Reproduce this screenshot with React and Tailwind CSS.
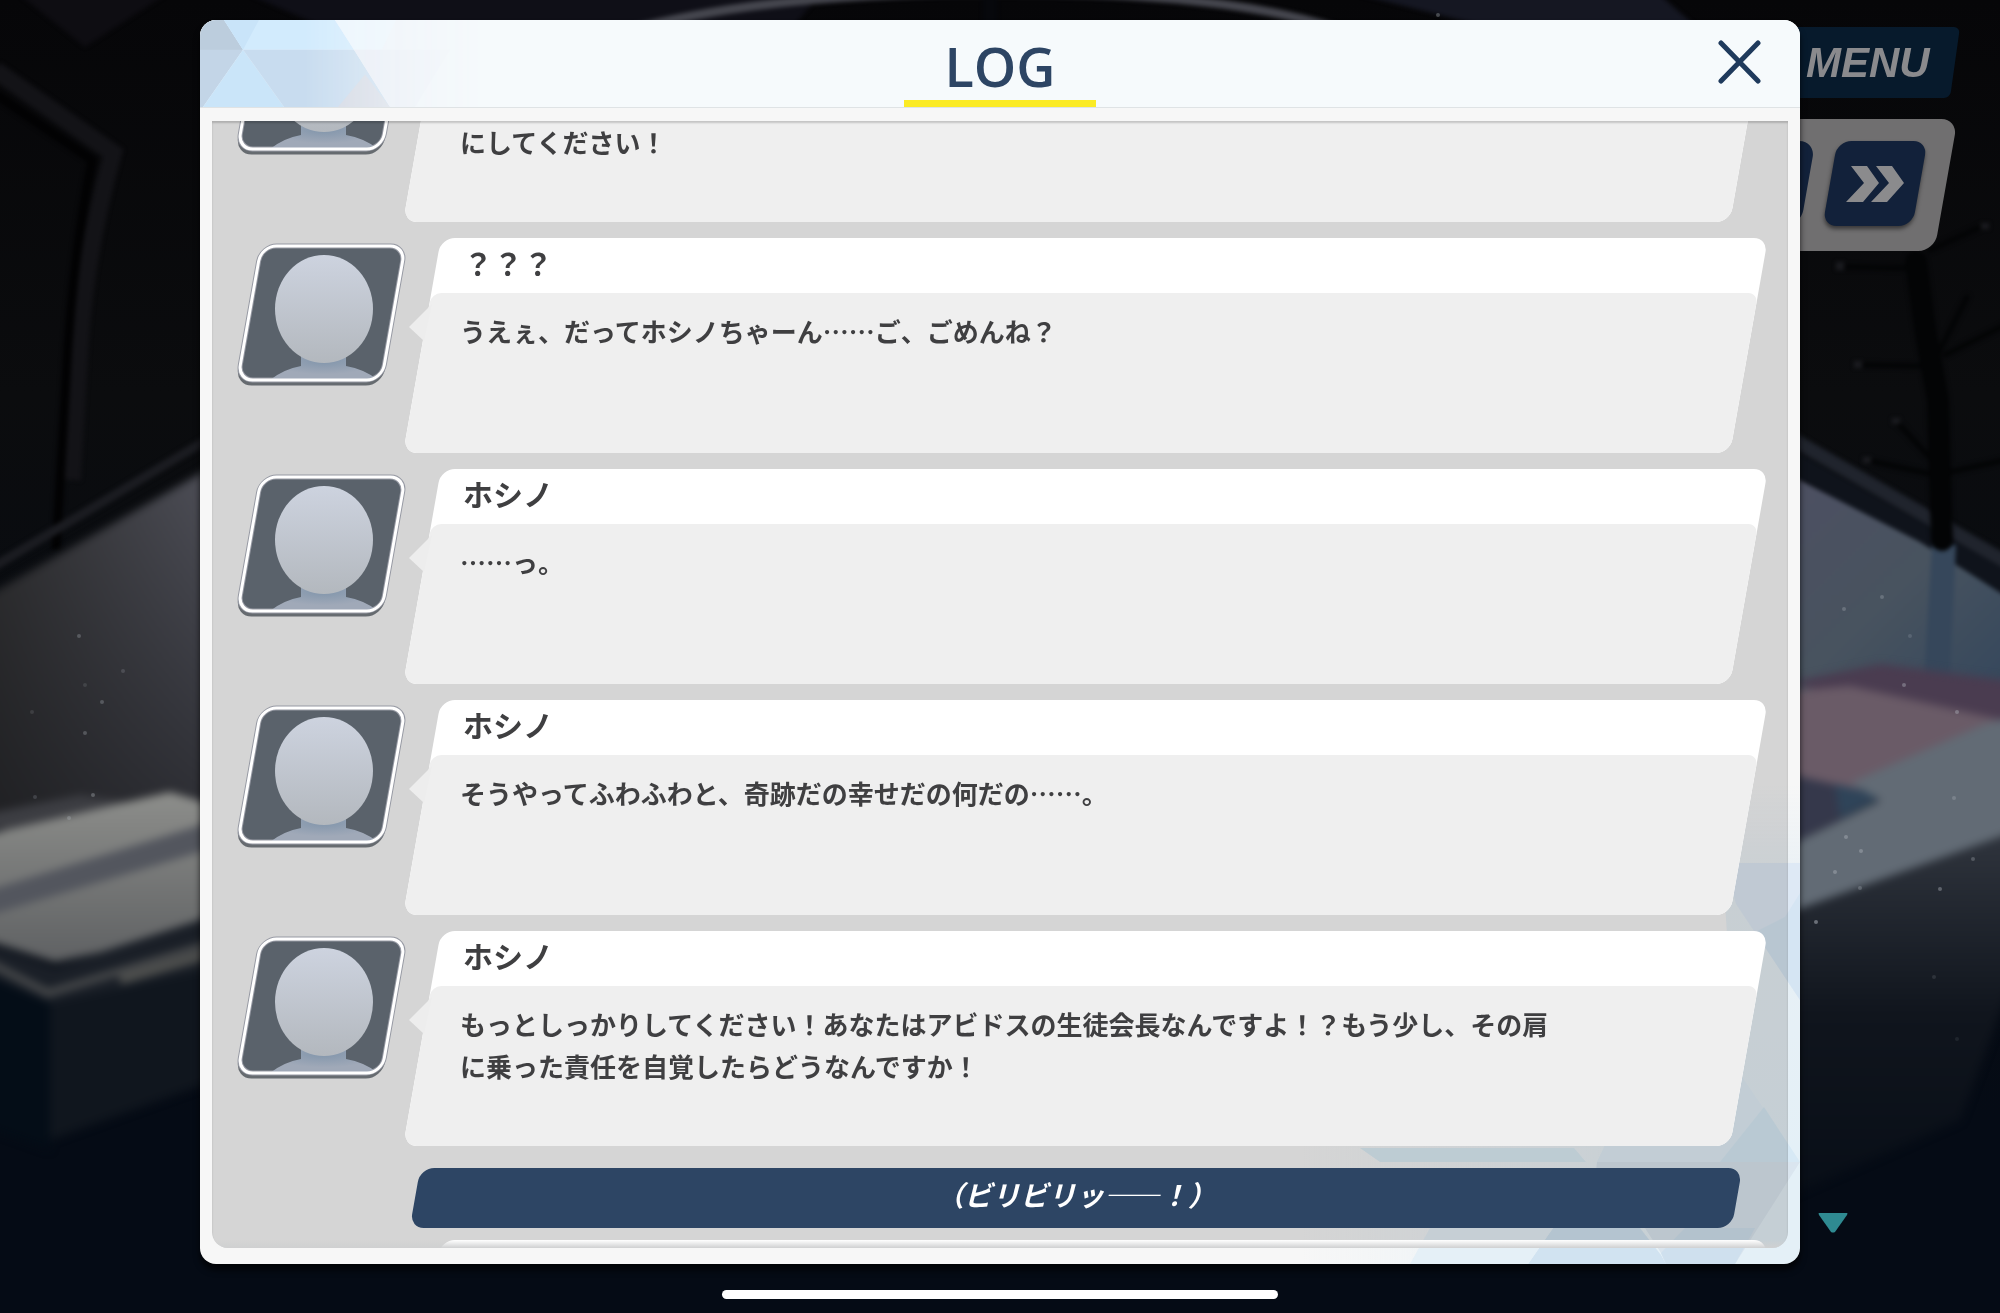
import React from 'react';

const LOG = [
  { type: 'talk', avatar: true, name: '', lines: ['', 'にしてください！'] },
  { type: 'talk', avatar: true, name: '？？？', lines: ['うえぇ、だってホシノちゃーん……ご、ごめんね？'] },
  { type: 'talk', avatar: true, name: 'ホシノ', lines: ['……っ。'] },
  { type: 'talk', avatar: true, name: 'ホシノ', lines: ['そうやってふわふわと、奇跡だの幸せだの何だの……。'] },
  {
    type: 'talk',
    avatar: true,
    name: 'ホシノ',
    lines: [
      'もっとしっかりしてください！あなたはアビドスの生徒会長なんですよ！？もう少し、その肩',
      'に乗った責任を自覚したらどうなんですか！',
    ],
  },
  { type: 'narration', text: '（ビリビリッ――！）' },
  { type: 'talk', avatar: false, name: '', lines: [] },
];

// x, y, radius, opacity
const DUST = [
  [79, 636, 2, 0.3], [102, 702, 2, 0.3], [123, 671, 2, 0.2], [85, 685, 2, 0.15], [85, 733, 2, 0.3],
  [93, 795, 2, 0.35], [32, 712, 2, 0.15], [35, 797, 2, 0.2], [69, 818, 2, 0.3], [1844, 609, 2, 0.3],
  [1882, 597, 2, 0.3], [1910, 636, 2, 0.2], [1904, 685, 2, 0.4], [1957, 712, 2, 0.4], [1954, 798, 2, 0.3],
  [1846, 837, 2, 0.4], [1861, 851, 2, 0.4], [1835, 872, 2, 0.4], [1860, 888, 2, 0.3], [1940, 889, 2, 0.4],
  [1816, 922, 2, 0.5], [1973, 859, 2, 0.3], [1934, 977, 2, 0.15], [1957, 1039, 2, 0.1], [1438, 15, 2, 0.35],
];

function Scene() {
  return (
    <svg className="absolute inset-0 w-full h-full" viewBox="0 0 2000 1313" preserveAspectRatio="xMidYMid slice" aria-hidden="true">
      <defs>
        <linearGradient id="floor" x1="0" y1="0" x2="0" y2="1">
          <stop offset="0" stopColor="#060608" />
          <stop offset="0.3" stopColor="#0b0c0e" />
          <stop offset="0.85" stopColor="#050b15" />
          <stop offset="1" stopColor="#050b15" />
        </linearGradient>
        <linearGradient id="wallL" x1="0" y1="0" x2="1" y2="0">
          <stop offset="0" stopColor="#2d2d2e" />
          <stop offset="1" stopColor="#50515a" />
        </linearGradient>
        <linearGradient id="shadeL" x1="0" y1="0" x2="0" y2="1">
          <stop offset="0" stopColor="#15161a" stopOpacity="0" />
          <stop offset="1" stopColor="#15161a" stopOpacity="0.6" />
        </linearGradient>
        <linearGradient id="wallR" x1="0" y1="0" x2="1" y2="1">
          <stop offset="0" stopColor="#4d4f62" />
          <stop offset="0.5" stopColor="#48535f" />
          <stop offset="1" stopColor="#33465c" />
        </linearGradient>
        <linearGradient id="benchL" x1="0" y1="0" x2="0" y2="1">
          <stop offset="0" stopColor="#8d8e8b" />
          <stop offset="1" stopColor="#5f6163" />
        </linearGradient>
        <linearGradient id="fadeR" x1="0" y1="0" x2="0" y2="1">
          <stop offset="0" stopColor="#30353e" />
          <stop offset="0.5" stopColor="#10151d" />
          <stop offset="1" stopColor="#080e17" />
        </linearGradient>
        <filter id="soft" x="-10%" y="-10%" width="120%" height="120%" colorInterpolationFilters="sRGB"><feGaussianBlur stdDeviation="4" /></filter>
        <filter id="thin" x="-20%" y="-20%" width="140%" height="140%" colorInterpolationFilters="sRGB"><feGaussianBlur stdDeviation="2" /></filter>
      </defs>
      <rect width="2000" height="1313" fill="url(#floor)" />

      <g filter="url(#thin)">
        <path d="M20 -5L85 47L165 -5Z" fill="#0e0d12" />
        <path d="M250 -5H820L790 30H330Z" fill="#0f0f17" />
        <path d="M630 30Q770 -8 1000 -8T1340 30" stroke="#45464e" strokeWidth="9" fill="none" />
        <path d="M1360 -5H1660L1700 30H1500Z" fill="#151722" />
        <path d="M990 -5V30" stroke="#07080c" strokeWidth="14" />
        <path d="M-5 70L113 153Q86 250 80 340L72 480" stroke="#131317" strokeWidth="18" fill="none" />
        <path d="M-5 94L92 160Q72 260 66 380L56 550" stroke="#020203" strokeWidth="9" fill="none" />
        <path d="M-5 566L220 432" stroke="#1b1c21" strokeWidth="9" />
      </g>

      <g filter="url(#soft)">
        <path d="M-20 600L220 462V830H-20Z" fill="url(#wallL)" />
        <path d="M-20 600L220 462V830H-20Z" fill="url(#shadeL)" />
        <path d="M-20 815L80 795L200 812V830H-20Z" fill="#3c3d42" />
        <path d="M-20 836L170 792L230 810V925L55 962L-20 938Z" fill="url(#benchL)" />
        <path d="M-20 893L230 816V843L-20 918Z" fill="#53565e" />
        <path d="M-20 940L55 967L230 910V1080H-20Z" fill="#1a1f27" />
        <path d="M-20 958L48 993L230 938" stroke="#46484a" strokeWidth="8" fill="none" />
        <path d="M120 980L230 948" stroke="#50514f" strokeWidth="9" />
        <path d="M-20 972L50 1003V1150L-20 1125Z" fill="#040d17" />
        <path d="M50 1003L230 965V1075L50 1140Z" fill="#10161e" />
      </g>

      <g filter="url(#thin)">
        <path d="M1780 432L2020 570" stroke="#20242d" strokeWidth="14" />
        <path d="M1780 455L2020 590" stroke="#0f131b" strokeWidth="22" />
        <path d="M1780 470L1920 542L2020 605V700H1780Z" fill="url(#wallR)" />
        <path d="M1932 545H1956L1950 680H1924Z" fill="#36475b" />
      </g>
      <g filter="url(#soft)">
        <path d="M1790 682L1880 664L2020 682V740L1850 700Z" fill="#4a3c50" />
        <path d="M1780 692L1850 686L2020 724L1860 790H1780Z" fill="#6a5b67" />
        <path d="M1780 772L1885 796L1780 850Z" fill="#35384b" />
        <path d="M1835 784L1885 796L1840 818Z" fill="#2f4459" />
        <path d="M1780 850L1880 800L1850 783L1985 724L2020 716V830L1780 916Z" fill="#626b75" />
        <path d="M1780 916L2020 830V960L1960 1120L1780 1200Z" fill="url(#fadeR)" />
      </g>

      <g filter="url(#thin)">
        <g stroke="#030405" fill="none" strokeLinecap="round">
          <path d="M1916 262L1926 335L1938 400L1942 540" strokeWidth="22" />
          <path d="M1840 267L1905 268M1930 250L1985 225M1858 365L1925 366M1940 350L1967 297M1945 355L2005 325M1896 421L1932 460M1866 460L1935 475M1950 472L2005 460" strokeWidth="5" />
        </g>
        <path d="M1840 262V270M1858 361V368M1896 418V424M1867 457V463M1985 223V229" stroke="#1b1c20" strokeWidth="8" />
      </g>
      {DUST.map(([x, y, r, o], i) => <circle key={i} cx={x} cy={y} r={r} fill="#b4b9c1" opacity={o} />)}
    </svg>
  );
}

function GameControls() {
  return (
    <div className="absolute top-[27px] right-0 w-[210px] font-['Liberation_Sans',sans-serif]">
      <button className="relative block h-[71px] w-full pl-4 text-left">
        <span className="absolute inset-y-0 -left-4 right-[45px] -skew-x-[8deg] rounded-md bg-[#071a2c]" />
        <span className="relative text-[42px] leading-[70px] font-bold italic text-[#8a8a8d]">MENU</span>
      </button>
      <div className="relative mt-[21px] flex h-[132px] items-center">
        <span className="absolute inset-y-0 -left-10 right-[54px] -skew-x-[10deg] rounded-2xl bg-[#706f70]" />
        <span className="absolute top-[22px] h-[85px] w-[60px] -left-[42px] -skew-x-[10deg] rounded-2xl bg-[#12213a]" />
        <button aria-label="早送り" className="relative ml-10 -mt-[3px] flex h-[85px] w-[90px] items-center justify-center">
          <span className="absolute inset-0 -skew-x-[10deg] rounded-[14px] bg-[#12213a] shadow-[0_3px_4px_rgba(0,0,0,0.5)]" />
          <svg className="relative w-[58px] h-[36px]" viewBox="0 0 58 36" fill="#8b8b8d">
            <path d="M5 0H21L33 17L17 36H0L18 17Z" />
            <path d="M30 0H46L58 17L41 36H25L43 17Z" />
          </svg>
        </button>
      </div>
    </div>
  );
}

function HeaderTriangles() {
  return (
    <svg className="absolute left-0 top-0 h-full w-[300px]" viewBox="0 0 300 88" preserveAspectRatio="none" aria-hidden="true">
      <defs>
        <linearGradient id="hfade" x1="0" y1="0" x2="1" y2="0">
          <stop offset="0.35" stopColor="#fff" />
          <stop offset="0.95" stopColor="#fff" stopOpacity="0" />
        </linearGradient>
        <mask id="hmask"><rect width="300" height="88" fill="url(#hfade)" /></mask>
      </defs>
      <g mask="url(#hmask)">
        <rect width="300" height="88" fill="#eef3f9" />
        <path d="M0 0H24L43 30L3 88H0Z" fill="#c3d5e7" />
        <path d="M0 0H24L43 30H0Z" fill="#bccddd" />
        <path d="M24 0H135L154 30H43Z" fill="#d2ebfd" />
        <path d="M24 0H59L43 30Z" fill="#c9e4f9" />
        <path d="M43 30L84 88H3Z" fill="#cae5f9" />
        <path d="M43 30H154L190 88H84Z" fill="#c8dcef" />
        <path d="M165 55L190 88H138Z" fill="#d4d9e4" />
        <path d="M135 0H196L182 30H154Z" fill="#ecf6fd" />
        <path d="M154 30H250L215 88H190Z" fill="#e9edf6" />
      </g>
    </svg>
  );
}

// multiplied over the panel frame and the log background
function CornerTriangles() {
  return (
    <svg className="pointer-events-none absolute bottom-0 right-0 z-10 h-[480px] w-[500px] mix-blend-multiply" viewBox="0 -60 500 480" aria-hidden="true">
      <defs>
        <linearGradient id="cfade" x1="0" y1="0" x2="0" y2="1">
          <stop offset="0" stopColor="#eef7fd" stopOpacity="0" />
          <stop offset="0.3" stopColor="#f0f8fd" />
          <stop offset="1" stopColor="#ecf8ff" />
        </linearGradient>
        <linearGradient id="bfade" x1="0" y1="0" x2="1" y2="0">
          <stop offset="0" stopColor="#ecf8ff" stopOpacity="0" />
          <stop offset="1" stopColor="#ecf8ff" />
        </linearGradient>
      </defs>
      <path d="M431 -60H500V318H431V150L425 60Z" fill="url(#cfade)" />
      <path d="M0 300H431V420H0Z" fill="url(#bfade)" />
      <path d="M431 300H500V420H431Z" fill="#ecf8ff" />
      <path d="M425 19H500V156L436 60Z" fill="#e6f1fd" />
      <path d="M485 73L500 49V156L455 88Z" fill="#dcedfb" />
      <path d="M442 233L500 318H297L310 290H400Z" fill="#e8f6ff" />
      <path d="M464 263L500 318H420Z" fill="#def1fd" />
      <path d="M60 304H274L286 318H80Z" fill="#e3f4fd" />
      <path d="M297 318H500L435 420H366L361 409L345 384H290Z" fill="#e1edf7" />
      <path d="M253 384H340L361 411L366 420H228Z" fill="#d8ebf9" />
      <path d="M361 409L385 384H455L435 420H366Z" fill="#d6e8f6" />
      <path d="M130 384H253L228 420H110Z" fill="#edf8ff" />
    </svg>
  );
}

function Avatar() {
  return (
    <svg className="w-[172px] h-[146px] shrink-0" viewBox="0 0 172 146" aria-hidden="true">
      <defs>
        <linearGradient id="head" x1="0" y1="0" x2="0" y2="1">
          <stop offset="0" stopColor="#cdd3df" />
          <stop offset="1" stopColor="#b3b8be" />
        </linearGradient>
        <radialGradient id="body" cx="0.5" cy="0.3" r="0.5">
          <stop offset="0" stopColor="#8195ab" />
          <stop offset="1" stopColor="#a0a9b8" />
        </radialGradient>
        <clipPath id="frame"><rect x="26" y="4" width="144" height="134" rx="15" transform="skewX(-10)" /></clipPath>
      </defs>
      <rect x="26" y="8" width="144" height="134" rx="15" transform="skewX(-10)" fill="#666b70" stroke="#666b70" strokeWidth="3" />
      <rect x="26" y="4" width="144" height="134" rx="15" transform="skewX(-10)" fill="#5a626b" stroke="#9699a3" strokeWidth="5" />
      <g clipPath="url(#frame)">
        <path d="M65 110H110V124Q128 127 142 138H34Q48 127 65 124Z" fill="url(#body)" />
        <ellipse cx="88" cy="67" rx="49" ry="54" fill="url(#head)" />
      </g>
      <rect x="26" y="4" width="144" height="134" rx="15" transform="skewX(-10)" fill="none" stroke="#fff" strokeWidth="3" />
    </svg>
  );
}

function Talk({ avatar, name, lines }) {
  return (
    <li className="mb-4 flex h-[215px] items-start pl-[24px] pr-[39px]">
      <div className="w-[172px] pt-1">{avatar && <Avatar />}</div>
      <div className="relative ml-[14px] h-full flex-1">
        <div className="absolute inset-0 -skew-x-[10deg] overflow-hidden rounded-[14px] bg-white">
          <div className="mt-[55px] h-full rounded-t-[10px] bg-[#efefef]" />
        </div>
        {avatar && (
          <svg className="absolute -left-[13px] top-[66px] w-[23px] h-[37px]" viewBox="0 0 23 37" aria-hidden="true">
            <path d="M0 23L23 0L15 37Z" fill="#ededed" />
          </svg>
        )}
        <div className="relative pl-[38px]">
          {name && <h2 className="absolute left-[41px] top-0 text-[30px] leading-[48px] font-bold">{name}</h2>}
          <div className="pt-[72px] text-[26px] leading-[42px] font-bold">
            {lines.map((l, i) => <p key={i} className="min-h-[42px]">{l}</p>)}
          </div>
        </div>
      </div>
    </li>
  );
}

function Narration({ text }) {
  return (
    <li className="mb-3 pt-1.5 pl-[203px] pr-[51px]">
      <div className="relative h-[60px]">
        <div className="absolute inset-0 -skew-x-[10deg] rounded-[14px] bg-[#2d4564]" />
        <p className="relative text-center text-[28px] leading-[52px] font-bold italic text-white">{text}</p>
      </div>
    </li>
  );
}

export default function App() {
  return (
    <div className="relative flex min-h-screen flex-col items-center overflow-hidden bg-[#050b15] font-['Noto_Sans_CJK_JP',sans-serif] text-[#3f3f41]">
      <Scene />
      <GameControls />
      <svg className="absolute right-[152px] bottom-[80px] w-[30px] h-[20px]" viewBox="0 0 30 20" aria-hidden="true">
        <path d="M1 0H29Q30 0 29 2L17 19Q15 20 13 19L1 2Q0 0 1 0Z" fill="#2f8a91" />
      </svg>

      <main className="relative mt-5 flex h-[calc(100vh-69px)] w-4/5 flex-col overflow-hidden rounded-2xl bg-[#f7f7f7] shadow-[0_6px_6px_rgba(0,0,0,0.7)]">
        <header className="relative flex h-[88px] shrink-0 justify-center border-b border-[#dfe3e5] bg-[#f6fafc]">
          <HeaderTriangles />
          <div className="relative flex w-48 flex-col items-center justify-end">
            <h1 className="font-['Open_Sans',sans-serif] text-[54px] leading-[68px] font-semibold text-[#2d4564]">LOG</h1>
            <div className="h-[7px] w-full bg-[#fbeb25]" />
          </div>
          <button aria-label="閉じる" className="absolute right-[34px] top-[16px] p-1">
            <svg className="w-[44px] h-[44px]" viewBox="0 0 44 44" fill="none" stroke="#1f3a5c" strokeWidth="5" strokeLinecap="round">
              <path d="M3 3L40 41M40 3L3 41" />
            </svg>
          </button>
        </header>
        <section className="relative mx-3 mt-[13px] mb-4 min-h-0 flex-1 overflow-hidden rounded-b-2xl bg-[#d5d5d5]">
          <ul className="relative z-20 -mt-[114px]">
            {LOG.map((e, i) => e.type === 'talk' ? <Talk key={i} avatar={e.avatar} name={e.name} lines={e.lines} /> : <Narration key={i} text={e.text} />)}
          </ul>
          <div className="pointer-events-none absolute inset-x-0 bottom-0 z-20 h-2 bg-linear-to-b from-[#cfd0d1]/0 to-[#cfd0d1]" />
          <div className="pointer-events-none absolute inset-0 z-20 rounded-b-2xl shadow-[inset_0_2px_2px_rgba(0,0,0,0.18)]" />
        </section>
        <CornerTriangles />
      </main>

      <div className="relative mt-[26px] h-[9px] w-[556px] rounded-full bg-white" />
    </div>
  );
}
